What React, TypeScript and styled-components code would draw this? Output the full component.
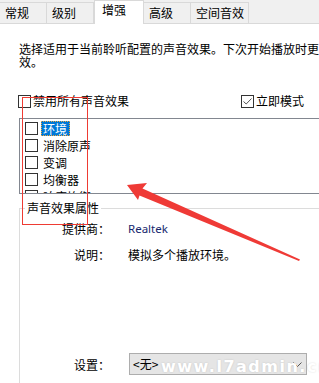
import React from 'react';
import styled, { createGlobalStyle } from 'styled-components';

const GlobalStyle = createGlobalStyle`
  html, body { margin: 0; padding: 0; background: #fff; overflow: hidden; }
  body {
    font-family: "Noto Sans CJK SC", "Noto Sans", sans-serif;
    font-size: 12px;
    color: #000;
  }
`;

const Window = styled.div`
  position: relative;
  width: 360px;
  height: 383px;
  overflow: hidden;
  background: #fff;
`;

const TabStrip = styled.div`
  display: flex;
  align-items: flex-end;
  height: 23px;
  background: #f0f0f0;
  border-bottom: 1px solid #d9d9d9;
`;

const Tab = styled.div<{ $w: number; $active?: boolean }>`
  box-sizing: border-box;
  width: ${(p) => p.$w}px;
  height: ${(p) => (p.$active ? 24 : 21)}px;
  margin-bottom: ${(p) => (p.$active ? -1 : 0)}px;
  padding: ${(p) => (p.$active ? '1px 0 0 7px' : '2px 0 0 5px')};
  background: ${(p) => (p.$active ? '#fff' : '#f0f0f0')};
  border-top: 1px solid #d9d9d9;
  border-right: 1px solid #d9d9d9;
  border-left: ${(p) => (p.$active ? '1px solid #d9d9d9' : 'none')};
  line-height: 16px;
  white-space: nowrap;
`;

const Description = styled.p`
  margin: 18px 0 0 19px;
  width: 336px;
  line-height: 13px;
`;

const OptionsRow = styled.div`
  display: flex;
  justify-content: space-between;
  align-items: center;
  margin: 25px 0 0 18px;
  width: 286px;
  height: 16px;
`;

const CheckItem = styled.label`
  display: flex;
  align-items: center;
  gap: 2px;
  line-height: 16px;
`;

const Box = styled.span`
  box-sizing: border-box;
  width: 13px;
  height: 13px;
  border: 1px solid #333;
  background: #fff;
  flex-shrink: 0;
  display: flex;
  align-items: center;
  justify-content: center;
`;

const ListBox = styled.div`
  box-sizing: border-box;
  margin: 9px 0 0 19px;
  width: 340px;
  height: 76px;
  border: 1px solid #828790;
  padding: 1px 0 0 5px;
  overflow: hidden;
`;

const ListRow = styled.div`
  display: flex;
  align-items: center;
  height: 17px;
`;

const ItemLabel = styled.span<{ $selected?: boolean }>`
  box-sizing: border-box;
  margin-left: 3px;
  height: 15px;
  padding: 0 2px 0 1px;
  line-height: 13px;
  border: 1px dotted ${(p) => (p.$selected ? '#f3a640' : 'transparent')};
  background: ${(p) => (p.$selected ? '#0078d7' : 'transparent')};
  color: ${(p) => (p.$selected ? '#fff' : '#000')};
`;

const Group = styled.fieldset`
  box-sizing: border-box;
  margin: 6px 0 0 19px;
  padding: 5px 0 0 0;
  width: 340px;
  height: 200px;
  border: 1px solid #dcdcdc;
  min-inline-size: auto;
`;

const Legend = styled.legend`
  margin-left: 5px;
  padding: 0 2px;
  line-height: 16px;
`;

const InfoGrid = styled.div`
  display: grid;
  grid-template-columns: 90px auto;
  column-gap: 18px;
  row-gap: 10px;
  line-height: 16px;
`;

const FieldLabel = styled.span`
  text-align: right;
`;

const Vendor = styled.span`
  font-family: "Noto Sans", "Open Sans", sans-serif;
  font-size: 11.5px;
  color: #17286e;
`;

const SettingRow = styled.div`
  display: grid;
  grid-template-columns: 90px auto;
  column-gap: 19px;
  align-items: center;
  margin-top: 90px;
`;

const Select = styled.div`
  box-sizing: border-box;
  width: 178px;
  height: 22px;
  background: #e5e5e5;
  border: 1px solid #adadad;
  display: flex;
  align-items: center;
  justify-content: space-between;
  padding: 0 4px 0 3px;
  line-height: 16px;
`;

const RedFrame = styled.div`
  position: absolute;
  left: 22px;
  top: 97px;
  width: 66px;
  height: 128px;
  box-sizing: border-box;
  border: 1px solid #ee3b33;
  pointer-events: none;
`;

const ArrowLayer = styled.svg`
  position: absolute;
  left: 0;
  top: 0;
  pointer-events: none;
`;

const Watermark = styled.span`
  position: absolute;
  left: 161px;
  top: 357px;
  font-family: "DejaVu Sans", sans-serif;
  font-weight: bold;
  font-size: 16px;
  letter-spacing: 1.5px;
  color: #fff;
  white-space: nowrap;
  text-shadow: 0 0 2px rgba(0, 0, 0, 0.15);
  pointer-events: none;
`;

const tabs = [
  { label: '常规', w: 47 },
  { label: '级别', w: 47 },
  { label: '增强', w: 50, active: true },
  { label: '高级', w: 47 },
  { label: '空间音效', w: 58 },
];

const effects = ['环境', '消除原声', '变调', '均衡器', '响度均衡'];

const CheckMark = () => (
  <svg width="11" height="11" viewBox="0 0 11 11">
    <path d="M1.5 5.5 L4.2 8 L9.5 2.5" fill="none" stroke="#555" strokeWidth="1" />
  </svg>
);

export default function App() {
  return (
    <Window>
      <GlobalStyle />
      <TabStrip>
        {tabs.map((t) => (
          <Tab key={t.label} $w={t.w} $active={t.active}>
            {t.label}
          </Tab>
        ))}
      </TabStrip>

      <Description>选择适用于当前聆听配置的声音效果。下次开始播放时更改生效。</Description>

      <OptionsRow>
        <CheckItem>
          <Box />
          禁用所有声音效果
        </CheckItem>
        <CheckItem>
          <Box>
            <CheckMark />
          </Box>
          立即模式
        </CheckItem>
      </OptionsRow>

      <ListBox>
        {effects.map((e, i) => (
          <ListRow key={e}>
            <Box />
            <ItemLabel $selected={i === 0}>{e}</ItemLabel>
          </ListRow>
        ))}
      </ListBox>

      <Group>
        <Legend>声音效果属性</Legend>
        <InfoGrid>
          <FieldLabel>提供商：</FieldLabel>
          <Vendor>Realtek</Vendor>
          <FieldLabel>说明：</FieldLabel>
          <span>模拟多个播放环境。</span>
        </InfoGrid>
        <SettingRow>
          <FieldLabel>设置：</FieldLabel>
          <Select>
            <span>&lt;无&gt;</span>
            <svg width="9" height="5" viewBox="0 0 9 5">
              <path d="M0.5 0.5 L4.5 4.5 L8.5 0.5" fill="none" stroke="#555" strokeWidth="1" />
            </svg>
          </Select>
        </SettingRow>
      </Group>

      <RedFrame />
      <ArrowLayer width="360" height="383" viewBox="0 0 360 383">
        <polygon
          points="127,185 147,183 142.5,188.5 300,259.5 299,261 139.5,195.5 138,200"
          fill="#ef3a36"
        />
      </ArrowLayer>
      <Watermark>www.l7admin.cn</Watermark>
    </Window>
  );
}
